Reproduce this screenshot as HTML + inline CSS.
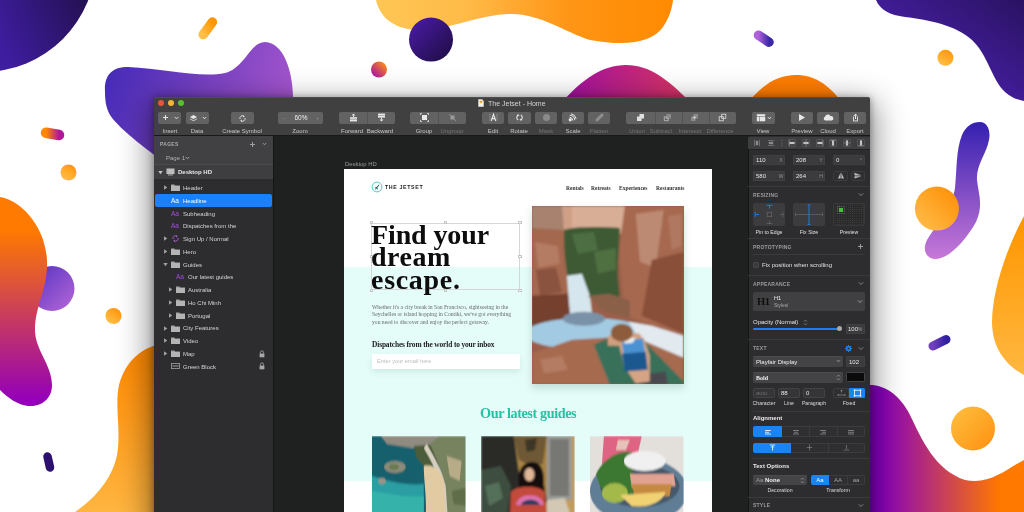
<!DOCTYPE html>
<html><head><meta charset="utf-8">
<style>
*{margin:0;padding:0;box-sizing:border-box}
html,body{width:1024px;height:512px;overflow:hidden;background:#fff;font-family:"Liberation Sans",sans-serif}
.a{position:absolute}
.t{position:absolute;white-space:nowrap;line-height:0;height:0;will-change:transform}
.t.c{transform:translateX(-50%)}
.s{font-family:"Liberation Serif",serif}
#bg{position:absolute;left:0;top:0}
</style></head><body>
<svg id="bg" width="1024" height="512" viewBox="0 0 1024 512">
<defs>
<linearGradient id="g1" gradientUnits="userSpaceOnUse" x1="0" y1="40" x2="90" y2="0"><stop offset="0" stop-color="#3e1d9e"/><stop offset="1" stop-color="#231050"/></linearGradient>
<linearGradient id="g2" x1="0" y1="0" x2="1" y2="0"><stop offset="0" stop-color="#ff8a00"/><stop offset="1" stop-color="#b0179a"/></linearGradient>
<linearGradient id="g3" x1="0" y1="0" x2="1" y2="0.3"><stop offset="0" stop-color="#3f28b5"/><stop offset="1" stop-color="#a455cc"/></linearGradient>
<linearGradient id="g4" x1="0" y1="1" x2="1" y2="0"><stop offset="0" stop-color="#ffbe48"/><stop offset="1" stop-color="#ff9500"/></linearGradient>
<linearGradient id="g5" x1="0" y1="0" x2="1" y2="1"><stop offset="0" stop-color="#4c1ca8"/><stop offset="1" stop-color="#1c0c40"/></linearGradient>
<linearGradient id="g6" x1="1" y1="0" x2="0" y2="1"><stop offset="0.1" stop-color="#ff9010"/><stop offset="0.9" stop-color="#a810a8"/></linearGradient>
<linearGradient id="g7" x1="0" y1="0" x2="1" y2="0"><stop offset="0" stop-color="#ffc654"/><stop offset="0.3" stop-color="#ffbb48"/><stop offset="0.65" stop-color="#ff9516"/><stop offset="1" stop-color="#ff8a00"/></linearGradient>
<linearGradient id="g8" x1="0" y1="0" x2="1" y2="0"><stop offset="0" stop-color="#a010a0"/><stop offset="1" stop-color="#d83560"/></linearGradient>
<linearGradient id="g9" x1="0" y1="0" x2="1" y2="0"><stop offset="0" stop-color="#b060d8"/><stop offset="1" stop-color="#3a28a8"/></linearGradient>
<linearGradient id="g10" x1="0.8" y1="0" x2="0.2" y2="1"><stop offset="0" stop-color="#ff9408"/><stop offset="1" stop-color="#ffc24a"/></linearGradient>
<linearGradient id="g11" x1="0" y1="1" x2="1" y2="0"><stop offset="0.2" stop-color="#4c22b2"/><stop offset="1" stop-color="#2a1262"/></linearGradient>
<linearGradient id="g12" x1="0" y1="0" x2="0" y2="1"><stop offset="0" stop-color="#3420b0"/><stop offset="1" stop-color="#c878d8"/></linearGradient>
<linearGradient id="g13" x1="1" y1="0" x2="0" y2="1"><stop offset="0" stop-color="#ff8c00"/><stop offset="1" stop-color="#ffc050"/></linearGradient>
<linearGradient id="g14" x1="0" y1="0" x2="0" y2="1"><stop offset="0" stop-color="#ff9500"/><stop offset="1" stop-color="#ffb840"/></linearGradient>
<linearGradient id="g15" x1="0" y1="0" x2="1" y2="0"><stop offset="0" stop-color="#7040c0"/><stop offset="1" stop-color="#3020a0"/></linearGradient>
<linearGradient id="g16" gradientUnits="userSpaceOnUse" x1="880" y1="0" x2="1000" y2="0"><stop offset="0" stop-color="#8800c0"/><stop offset="1" stop-color="#ff7800"/></linearGradient>
<linearGradient id="g17" x1="0" y1="0" x2="1" y2="1"><stop offset="0" stop-color="#ffc040"/><stop offset="1" stop-color="#ff9010"/></linearGradient>
<linearGradient id="g18" gradientUnits="userSpaceOnUse" x1="0" y1="230" x2="0" y2="400"><stop offset="0" stop-color="#ff7a00"/><stop offset="1" stop-color="#9400b8"/></linearGradient>
<linearGradient id="g19" x1="0" y1="0" x2="1" y2="1"><stop offset="0" stop-color="#5030c0"/><stop offset="1" stop-color="#b868d8"/></linearGradient>
<linearGradient id="g20" gradientUnits="userSpaceOnUse" x1="0" y1="345" x2="0" y2="512"><stop offset="0" stop-color="#ff8800"/><stop offset="1" stop-color="#ffb540"/></linearGradient>
</defs>
<circle cx="-17" cy="-41" r="113" fill="url(#g1)"/>
<line x1="46" y1="132.8" x2="59" y2="135" stroke="url(#g2)" stroke-width="10.5" stroke-linecap="round"/>
<path d="M105 92 C104 75 112 67 128 67 C165 69 200 78 225 73 C245 68 250 42 265 42 C285 43 295 75 293 110 L293 200 L175 170 C150 152 120 130 110 115 C106 108 105 100 105 92Z" fill="url(#g3)"/>
<line x1="203.2" y1="34.6" x2="212.4" y2="22" stroke="url(#g4)" stroke-width="9.5" stroke-linecap="round"/>
<path d="M376 0 C380 18 395 30 420 30 C450 30 480 14 512 14 C540 14 565 32 590 40 C628 47 652 42 663 27 C669 18 672 9 673 0Z" fill="url(#g7)"/>
<circle cx="431" cy="39.6" r="22" fill="url(#g5)"/>
<circle cx="379" cy="69.5" r="8" fill="url(#g6)"/>
<path d="M564 100 C582 80 602 65 626 65 C650 65 668 80 688 100Z" fill="url(#g8)"/>
<line x1="758.5" y1="35.2" x2="769" y2="42.2" stroke="url(#g9)" stroke-width="9.5" stroke-linecap="round"/>
<circle cx="945.4" cy="57.8" r="8" fill="url(#g10)"/>
<path d="M750 100 C763 85 777 75 796 75 C815 75 828 85 840 100Z" fill="#ff7d00"/>
<path d="M876 0 C880 10 890 15 905 17 C930 20 955 25 972 40 C988 55 992 80 1005 92 C1012 98 1018 100 1024 101 L1024 0Z" fill="url(#g11)"/>
<path d="M980 122 C987 122 991 130 989 140 C986 155 976 165 977 180 C978 192 984 205 976 222 C966 240 950 258 936 259 C926 259 922 250 927 240 C938 222 952 208 955 188 C957 168 956 150 962 135 C966 126 972 122 980 122Z" fill="url(#g12)"/>
<circle cx="936.9" cy="208.6" r="22" fill="url(#g13)"/>
<path d="M1024 216 C1008 245 992 290 992 322 C992 347 1005 365 1024 375Z" fill="url(#g14)"/>
<line x1="933" y1="346" x2="946" y2="339.5" stroke="url(#g15)" stroke-width="9" stroke-linecap="round"/>
<path d="M870 385 C885 385 900 395 910 415 C922 440 935 470 965 480 C990 485 1005 470 1024 460 L1024 512 L870 512Z" fill="url(#g16)"/>
<circle cx="973" cy="428.5" r="22" fill="url(#g17)"/>
<circle cx="52" cy="288.5" r="22.5" fill="url(#g19)"/>
<path d="M0 197 C20 200 45 225 47 260 C48 290 35 305 35 330 C35 350 52 365 52 385 C52 400 40 407 28 406 C18 405 8 398 0 390Z" fill="url(#g18)"/>
<circle cx="68.5" cy="172.5" r="8" fill="url(#g10)"/>
<circle cx="113.5" cy="316" r="8" fill="url(#g10)"/>
<line x1="47.5" y1="456.5" x2="50" y2="467.5" stroke="#2c1070" stroke-width="8.5" stroke-linecap="round"/>
<path d="M160 344 C142 348 126 360 119 385 C115 405 120 425 118 448 C116 472 100 495 75 512 L160 512Z" fill="url(#g20)"/>
</svg>
<div class="a" style="left:154px;top:97px;width:716px;height:430px;background:#1f2020;border-radius:3px 3px 0 0;box-shadow:0 1px 6px 1px rgba(0,0,0,.3),0 10px 30px 6px rgba(0,0,0,.42)"></div>
<div class="a" style="left:154px;top:97px;width:716px;height:39px;background:#404041;border-radius:3px 3px 0 0;box-shadow:inset 0 0.6px 0 #5a5a5b;border-bottom:1px solid #191919"></div>
<div class="a" style="left:157.70000000000002px;top:100.1px;width:6.4px;height:6.4px;background:#e5553d;border-radius:50%"></div>
<div class="a" style="left:167.9px;top:100.1px;width:6.4px;height:6.4px;background:#f2b632;border-radius:50%"></div>
<div class="a" style="left:178.05px;top:100.1px;width:6.4px;height:6.4px;background:#55c22b;border-radius:50%"></div>
<svg class="a" style="left:478.2px;top:99px" width="6" height="8" viewBox="0 0 6 8"><path d="M0.3 0.3 H4 L5.7 2 V7.7 H0.3Z" fill="#f2f2f2"/><path d="M1.3 2.6 L2 1.8 H4 L4.7 2.6 L3 4.6Z" fill="#f39c1f"/></svg>
<div class="t" style="left:487.5px;top:103.9px;font-size:7px;color:#d2d2d2">The Jetset - Home</div>
<div class="a" style="left:157.8px;top:112px;width:23.44999999999999px;height:11.5px;background:#626263;border-radius:2px;"></div>
<div class="a" style="left:185.5px;top:112px;width:23.5px;height:11.5px;background:#626263;border-radius:2px;"></div>
<div class="a" style="left:231px;top:112px;width:22.5px;height:11.5px;background:#626263;border-radius:2px;"></div>
<div class="a" style="left:278px;top:112px;width:44.80000000000001px;height:11.5px;background:#626263;border-radius:2px;"></div>
<div class="a" style="left:338.8px;top:112px;width:56.0px;height:11.5px;background:#626263;border-radius:2px;"></div>
<div class="a" style="left:367.3px;top:112px;width:0.6px;height:11.5px;background:#545455"></div>
<div class="a" style="left:410px;top:112px;width:56px;height:11.5px;background:#626263;border-radius:2px;"></div>
<div class="a" style="left:437.8px;top:112px;width:0.6px;height:11.5px;background:#545455"></div>
<div class="a" style="left:482px;top:112px;width:21.80000000000001px;height:11.5px;background:#626263;border-radius:2px;"></div>
<div class="a" style="left:508.2px;top:112px;width:22.500000000000057px;height:11.5px;background:#626263;border-radius:2px;"></div>
<div class="a" style="left:534.8px;top:112px;width:22.200000000000045px;height:11.5px;background:#626263;border-radius:2px;"></div>
<div class="a" style="left:561.5px;top:112px;width:22.5px;height:11.5px;background:#626263;border-radius:2px;"></div>
<div class="a" style="left:588px;top:112px;width:22.399999999999977px;height:11.5px;background:#626263;border-radius:2px;"></div>
<div class="a" style="left:626px;top:112px;width:109.89999999999998px;height:11.5px;background:#626263;border-radius:2px;"></div>
<div class="a" style="left:654.7px;top:112px;width:0.6px;height:11.5px;background:#545455"></div>
<div class="a" style="left:681.6px;top:112px;width:0.6px;height:11.5px;background:#545455"></div>
<div class="a" style="left:708.5px;top:112px;width:0.6px;height:11.5px;background:#545455"></div>
<div class="a" style="left:751.5px;top:112px;width:23.5px;height:11.5px;background:#626263;border-radius:2px;"></div>
<div class="a" style="left:790.6px;top:112px;width:22.100000000000023px;height:11.5px;background:#626263;border-radius:2px;"></div>
<div class="a" style="left:817px;top:112px;width:22.399999999999977px;height:11.5px;background:#626263;border-radius:2px;"></div>
<div class="a" style="left:844px;top:112px;width:21.799999999999955px;height:11.5px;background:#626263;border-radius:2px;"></div>
<div class="t c" style="left:169.5px;top:130.6px;font-size:6px;color:#c8c8c8">Insert</div>
<div class="t c" style="left:197.2px;top:130.6px;font-size:6px;color:#c8c8c8">Data</div>
<div class="t c" style="left:242.3px;top:130.6px;font-size:6px;color:#c8c8c8">Create Symbol</div>
<div class="t c" style="left:300.4px;top:130.6px;font-size:6px;color:#c8c8c8">Zoom</div>
<div class="t c" style="left:352px;top:130.6px;font-size:6px;color:#c8c8c8">Forward</div>
<div class="t c" style="left:380.2px;top:130.6px;font-size:6px;color:#c8c8c8">Backward</div>
<div class="t c" style="left:424px;top:130.6px;font-size:6px;color:#c8c8c8">Group</div>
<div class="t c" style="left:452px;top:130.6px;font-size:6px;color:#747474">Ungroup</div>
<div class="t c" style="left:492.9px;top:130.6px;font-size:6px;color:#c8c8c8">Edit</div>
<div class="t c" style="left:519.4px;top:130.6px;font-size:6px;color:#c8c8c8">Rotate</div>
<div class="t c" style="left:545.9px;top:130.6px;font-size:6px;color:#747474">Mask</div>
<div class="t c" style="left:572.7px;top:130.6px;font-size:6px;color:#c8c8c8">Scale</div>
<div class="t c" style="left:599.2px;top:130.6px;font-size:6px;color:#747474">Flatten</div>
<div class="t c" style="left:636.5px;top:130.6px;font-size:6px;color:#747474">Union</div>
<div class="t c" style="left:661px;top:130.6px;font-size:6px;color:#747474">Subtract</div>
<div class="t c" style="left:689.5px;top:130.6px;font-size:6px;color:#747474">Intersect</div>
<div class="t c" style="left:719.5px;top:130.6px;font-size:6px;color:#747474">Difference</div>
<div class="t c" style="left:763.2px;top:130.6px;font-size:6px;color:#c8c8c8">View</div>
<div class="t c" style="left:801.6px;top:130.6px;font-size:6px;color:#c8c8c8">Preview</div>
<div class="t c" style="left:828.2px;top:130.6px;font-size:6px;color:#c8c8c8">Cloud</div>
<div class="t c" style="left:854.9px;top:130.6px;font-size:6px;color:#c8c8c8">Export</div>
<div class="a" style="left:163.2px;top:117.2px;width:5px;height:1px;background:#e8e8e8"></div>
<div class="a" style="left:165.2px;top:115.2px;width:1px;height:5px;background:#e8e8e8"></div>
<svg class="a" style="left:174px;top:116.2px" width="5" height="4" viewBox="0 0 5 4"><path d="M0.8 1 L2.5 2.8 L4.2 1" stroke="#e8e8e8" stroke-width="0.9" fill="none"/></svg>
<svg class="a" style="left:201.5px;top:116.2px" width="5" height="4" viewBox="0 0 5 4"><path d="M0.8 1 L2.5 2.8 L4.2 1" stroke="#e8e8e8" stroke-width="0.9" fill="none"/></svg>
<svg class="a" style="left:767px;top:116.2px" width="5" height="4" viewBox="0 0 5 4"><path d="M0.8 1 L2.5 2.8 L4.2 1" stroke="#e8e8e8" stroke-width="0.9" fill="none"/></svg>
<svg class="a" style="left:188.5px;top:114px" width="9" height="9" viewBox="0 0 9 9"><path d="M4.5 1 L8 3 L4.5 5 L1 3Z" fill="#e8e8e8"/><path d="M1 4.3 L4.5 6.3 L8 4.3 L8 5.3 L4.5 7.3 L1 5.3Z" fill="#c8c8c8"/></svg>
<svg class="a" style="left:238px;top:113.5px" width="9" height="9" viewBox="0 0 9 9"><path d="M2 5 A2.6 2.6 0 0 1 6 2.2 M7 4 A2.6 2.6 0 0 1 3 6.8" stroke="#e8e8e8" stroke-width="0.9" fill="none"/><path d="M5.2 1.2 L6.8 2.4 L5.2 3.4Z M3.8 5.6 L2.2 6.8 L3.8 7.8Z" fill="#e8e8e8"/></svg>
<div class="t" style="left:281.5px;top:117.7px;font-size:6px;color:#8a8a8a">−</div>
<div class="t" style="left:316px;top:117.7px;font-size:6px;color:#8a8a8a">+</div>
<div class="t c" style="left:300.6px;top:117.7px;font-size:6.5px;color:#f0f0f0">60%</div>
<svg class="a" style="left:348.5px;top:113px" width="9" height="9" viewBox="0 0 9 9"><path d="M4.5 0.5 L6.5 2.5 L2.5 2.5Z" fill="#e8e8e8"/><rect x="4" y="2.4" width="1" height="1.6" fill="#e8e8e8"/><rect x="1" y="4.2" width="7" height="1.6" fill="#e8e8e8"/><rect x="1" y="6.4" width="7" height="2" fill="#e8e8e8"/></svg>
<svg class="a" style="left:376.5px;top:113px" width="9" height="9" viewBox="0 0 9 9"><rect x="1" y="0.6" width="7" height="2" fill="#e8e8e8"/><rect x="1" y="3" width="7" height="1.6" fill="#e8e8e8"/><rect x="4" y="4.6" width="1" height="2" fill="#e8e8e8"/><path d="M4.5 8.5 L6.5 6.5 L2.5 6.5Z" fill="#e8e8e8"/></svg>
<svg class="a" style="left:419.5px;top:113px" width="9" height="9" viewBox="0 0 9 9"><rect x="2" y="2" width="5" height="5" fill="#e8e8e8"/><path d="M0.5 2 V0.5 H2 M7 0.5 H8.5 V2 M8.5 7 V8.5 H7 M2 8.5 H0.5 V7" stroke="#e8e8e8" stroke-width="0.8" fill="none"/></svg>
<svg class="a" style="left:447.5px;top:113px" width="9" height="9" viewBox="0 0 9 9"><rect x="2.5" y="2.5" width="4" height="4" fill="#9a9a9a"/><path d="M1 1 L8 8" stroke="#9a9a9a" stroke-width="0.8"/></svg>
<svg class="a" style="left:488.5px;top:113px" width="9" height="9" viewBox="0 0 9 9"><path d="M1 1 V8 M8 1 V8" stroke="#e8e8e8" stroke-width="0.5" stroke-dasharray="1 0.8"/><path d="M2.2 8 L4.5 1.2 L6.8 8 M3.1 5.6 H5.9" stroke="#e8e8e8" stroke-width="1.1" fill="none"/></svg>
<svg class="a" style="left:515px;top:113.2px" width="9" height="9" viewBox="0 0 9 9"><path d="M3.2 2.2 A2.7 2.7 0 0 0 3.2 7" stroke="#e8e8e8" stroke-width="1.1" fill="none"/><path d="M5.8 6.8 A2.7 2.7 0 0 0 5.8 2" stroke="#e8e8e8" stroke-width="1.1" fill="none"/><path d="M2.4 1 L4.6 2.2 L2.6 3.4Z M6.6 8 L4.4 6.8 L6.4 5.6Z" fill="#e8e8e8"/></svg>
<div class="a" style="left:542.5px;top:114.3px;width:7px;height:7px;background:#8a8a8a;border-radius:50%"></div>
<svg class="a" style="left:568px;top:113px" width="9" height="9" viewBox="0 0 9 9"><path d="M1.5 4.3 A3.2 3.2 0 0 1 4.7 7.5" stroke="#e8e8e8" stroke-width="1" fill="none"/><path d="M1.8 2.3 A5.2 5.2 0 0 1 6.7 7.2" stroke="#e8e8e8" stroke-width="1" fill="none"/><path d="M3 0.8 A6.5 6.5 0 0 1 8.2 6" stroke="#e8e8e8" stroke-width="1" fill="none"/><circle cx="2.2" cy="6.8" r="1.6" fill="#e8e8e8"/></svg>
<svg class="a" style="left:595px;top:113px" width="9" height="9" viewBox="0 0 9 9"><path d="M2 7 L7 2" stroke="#8e8e8e" stroke-width="3" stroke-linecap="round"/></svg>
<svg class="a" style="left:635.5px;top:113px" width="9" height="9" viewBox="0 0 9 9"><rect x="3.5" y="1" width="4.5" height="4.5" fill="#e0e0e0"/><rect x="1" y="3.5" width="4.5" height="4.5" fill="#e0e0e0"/></svg>
<svg class="a" style="left:662.9px;top:113px" width="9" height="9" viewBox="0 0 9 9"><rect x="3.5" y="1" width="4.5" height="4.5" fill="#8a8a8a"/><path d="M1.3 3.8 H3.5 V5.5 H5.3 V7.7 H1.3Z" fill="none" stroke="#d0d0d0" stroke-width="0.7"/></svg>
<svg class="a" style="left:690.2px;top:113px" width="9" height="9" viewBox="0 0 9 9"><rect x="3.5" y="1" width="4.5" height="4.5" fill="#8a8a8a"/><rect x="1" y="3.5" width="4.5" height="4.5" fill="#8a8a8a"/><rect x="3.5" y="3.5" width="2" height="2" fill="#e0e0e0"/></svg>
<svg class="a" style="left:717.5px;top:113px" width="9" height="9" viewBox="0 0 9 9"><rect x="3.7" y="1.2" width="4.1" height="4.1" fill="none" stroke="#e0e0e0" stroke-width="0.8"/><rect x="1.2" y="3.7" width="4.1" height="4.1" fill="none" stroke="#e0e0e0" stroke-width="0.8"/></svg>
<svg class="a" style="left:755.5px;top:113px" width="10" height="9" viewBox="0 0 10 9"><rect x="0.8" y="1.2" width="8.4" height="2" fill="#e8e8e8"/><rect x="0.8" y="3.7" width="2.6" height="4.6" fill="#e8e8e8"/><rect x="3.9" y="3.7" width="5.3" height="4.6" fill="#e8e8e8"/></svg>
<svg class="a" style="left:797px;top:113px" width="9" height="9" viewBox="0 0 9 9"><path d="M2 1 L8 4.5 L2 8Z" fill="#e8e8e8"/></svg>
<svg class="a" style="left:822.7px;top:112.8px" width="11" height="9" viewBox="0 0 11 9"><path d="M2.2 7.6 A2 2 0 0 1 2 3.8 A3 3 0 0 1 7.6 3.2 A2.2 2.2 0 0 1 8.6 7.6Z" fill="#e8e8e8"/></svg>
<svg class="a" style="left:850.5px;top:113px" width="9" height="9" viewBox="0 0 9 9"><path d="M2.5 3.5 V8 H6.5 V3.5" stroke="#e8e8e8" stroke-width="0.9" fill="none"/><path d="M4.5 0.8 L6.5 2.8 H2.5Z" fill="#e8e8e8"/><rect x="4" y="2.5" width="1" height="3.5" fill="#e8e8e8"/></svg>
<div class="a" style="left:154px;top:136px;width:119.5px;height:380px;background:#2d2d2f"></div>
<div class="a" style="left:154px;top:136px;width:119.5px;height:28px;background:#414143"></div>
<div class="a" style="left:154px;top:164.2px;width:119.5px;height:0.7px;background:#4b4b4d"></div>
<div class="a" style="left:154px;top:164.9px;width:119.5px;height:14.6px;background:#3e3e40"></div>
<div class="a" style="left:154px;top:179.5px;width:119.5px;height:0.7px;background:#2a2a2c"></div>
<div class="a" style="left:273.3px;top:136px;width:0.7px;height:380px;background:#151515"></div>
<div class="t" style="left:159.7px;top:144px;font-size:5px;font-weight:bold;color:#a8a8a8;letter-spacing:0.3px">PAGES</div>
<div class="a" style="left:250px;top:143.6px;width:5px;height:0.8px;background:#a0a0a0"></div>
<div class="a" style="left:252.1px;top:141.5px;width:0.8px;height:5px;background:#a0a0a0"></div>
<svg class="a" style="left:261.5px;top:142px" width="5" height="4" viewBox="0 0 5 4"><path d="M0.8 1 L2.5 2.8 L4.2 1" stroke="#a0a0a0" stroke-width="0.9" fill="none"/></svg>
<div class="t" style="left:165.6px;top:158px;font-size:6px;color:#b0b0b0">Page 1</div>
<svg class="a" style="left:185.3px;top:156.3px" width="5" height="4" viewBox="0 0 5 4"><path d="M0.8 1 L2.5 2.8 L4.2 1" stroke="#b0b0b0" stroke-width="0.9" fill="none"/></svg>
<svg class="a" style="left:157.5px;top:169.5px" width="5" height="5" viewBox="0 0 5 5"><path d="M0.3 1 L4.7 1 L2.5 4.3Z" fill="#c8c8c8"/></svg>
<svg class="a" style="left:165.5px;top:168px" width="9" height="8" viewBox="0 0 9 8"><rect x="0.5" y="0.5" width="8" height="5.5" fill="#bdbdbd"/><rect x="2" y="6.3" width="5" height="1.2" fill="#9a9a9a"/></svg>
<div class="t" style="left:177.8px;top:172.3px;font-size:6px;font-weight:bold;color:#e6e6e6">Desktop HD</div>
<div class="a" style="left:155.2px;top:194px;width:116.4px;height:13.2px;background:#1a80fb;border-radius:2px"></div>
<svg class="a" style="left:163.3px;top:185.3px" width="5" height="5" viewBox="0 0 5 5"><path d="M1 0.3 L4.3 2.5 L1 4.7Z" fill="#a0a0a0"/></svg>
<svg class="a" style="left:170.8px;top:184.3px" width="9" height="7" viewBox="0 0 9 7"><path d="M0 0.5 H3.3 L4.2 1.4 H9 V7 H0Z" fill="#a4a4a4"/><rect x="0" y="2" width="9" height="5" fill="#b4b4b4"/></svg>
<div class="t" style="left:182.8px;top:188.10000000000002px;font-size:6px;color:#d4d4d4">Header</div>
<div class="t" style="left:170.7px;top:200.75px;font-size:6.5px;color:#ffffff">Aa</div>
<div class="t" style="left:182.8px;top:200.85000000000002px;font-size:6px;color:#ffffff">Headline</div>
<div class="t" style="left:170.7px;top:213.5px;font-size:6.5px;color:#a64ee0">Aa</div>
<div class="t" style="left:182.8px;top:213.60000000000002px;font-size:6px;color:#d4d4d4">Subheading</div>
<div class="t" style="left:170.7px;top:226.25px;font-size:6.5px;color:#a64ee0">Aa</div>
<div class="t" style="left:182.8px;top:226.35000000000002px;font-size:6px;color:#d4d4d4">Dispatches from the</div>
<svg class="a" style="left:163.3px;top:236.3px" width="5" height="5" viewBox="0 0 5 5"><path d="M1 0.3 L4.3 2.5 L1 4.7Z" fill="#a0a0a0"/></svg>
<svg class="a" style="left:170.5px;top:234.3px" width="9" height="9" viewBox="0 0 9 9"><path d="M2 5 A2.6 2.6 0 0 1 6 2.2 M7 4 A2.6 2.6 0 0 1 3 6.8" stroke="#b35fd9" stroke-width="0.9" fill="none"/><path d="M5.2 1.2 L6.8 2.4 L5.2 3.4Z M3.8 5.6 L2.2 6.8 L3.8 7.8Z" fill="#b35fd9"/></svg>
<div class="t" style="left:182.8px;top:239.10000000000002px;font-size:6px;color:#d4d4d4">Sign Up / Normal</div>
<svg class="a" style="left:163.3px;top:249.05px" width="5" height="5" viewBox="0 0 5 5"><path d="M1 0.3 L4.3 2.5 L1 4.7Z" fill="#a0a0a0"/></svg>
<svg class="a" style="left:170.8px;top:248.05px" width="9" height="7" viewBox="0 0 9 7"><path d="M0 0.5 H3.3 L4.2 1.4 H9 V7 H0Z" fill="#a4a4a4"/><rect x="0" y="2" width="9" height="5" fill="#b4b4b4"/></svg>
<div class="t" style="left:182.8px;top:251.85000000000002px;font-size:6px;color:#d4d4d4">Hero</div>
<svg class="a" style="left:163.3px;top:261.8px" width="5" height="5" viewBox="0 0 5 5"><path d="M0.3 1 L4.7 1 L2.5 4.3Z" fill="#a0a0a0"/></svg>
<svg class="a" style="left:170.8px;top:260.8px" width="9" height="7" viewBox="0 0 9 7"><path d="M0 0.5 H3.3 L4.2 1.4 H9 V7 H0Z" fill="#a4a4a4"/><rect x="0" y="2" width="9" height="5" fill="#b4b4b4"/></svg>
<div class="t" style="left:182.8px;top:264.6px;font-size:6px;color:#d4d4d4">Guides</div>
<div class="t" style="left:175.7px;top:277.25px;font-size:6.5px;color:#a64ee0">Aa</div>
<div class="t" style="left:187.8px;top:277.35px;font-size:6px;color:#d4d4d4">Our latest guides</div>
<svg class="a" style="left:168.3px;top:287.3px" width="5" height="5" viewBox="0 0 5 5"><path d="M1 0.3 L4.3 2.5 L1 4.7Z" fill="#a0a0a0"/></svg>
<svg class="a" style="left:175.8px;top:286.3px" width="9" height="7" viewBox="0 0 9 7"><path d="M0 0.5 H3.3 L4.2 1.4 H9 V7 H0Z" fill="#a4a4a4"/><rect x="0" y="2" width="9" height="5" fill="#b4b4b4"/></svg>
<div class="t" style="left:187.8px;top:290.1px;font-size:6px;color:#d4d4d4">Australia</div>
<svg class="a" style="left:168.3px;top:300.05px" width="5" height="5" viewBox="0 0 5 5"><path d="M1 0.3 L4.3 2.5 L1 4.7Z" fill="#a0a0a0"/></svg>
<svg class="a" style="left:175.8px;top:299.05px" width="9" height="7" viewBox="0 0 9 7"><path d="M0 0.5 H3.3 L4.2 1.4 H9 V7 H0Z" fill="#a4a4a4"/><rect x="0" y="2" width="9" height="5" fill="#b4b4b4"/></svg>
<div class="t" style="left:187.8px;top:302.85px;font-size:6px;color:#d4d4d4">Ho Chi Minh</div>
<svg class="a" style="left:168.3px;top:312.8px" width="5" height="5" viewBox="0 0 5 5"><path d="M1 0.3 L4.3 2.5 L1 4.7Z" fill="#a0a0a0"/></svg>
<svg class="a" style="left:175.8px;top:311.8px" width="9" height="7" viewBox="0 0 9 7"><path d="M0 0.5 H3.3 L4.2 1.4 H9 V7 H0Z" fill="#a4a4a4"/><rect x="0" y="2" width="9" height="5" fill="#b4b4b4"/></svg>
<div class="t" style="left:187.8px;top:315.6px;font-size:6px;color:#d4d4d4">Portugal</div>
<svg class="a" style="left:163.3px;top:325.55px" width="5" height="5" viewBox="0 0 5 5"><path d="M1 0.3 L4.3 2.5 L1 4.7Z" fill="#a0a0a0"/></svg>
<svg class="a" style="left:170.8px;top:324.55px" width="9" height="7" viewBox="0 0 9 7"><path d="M0 0.5 H3.3 L4.2 1.4 H9 V7 H0Z" fill="#a4a4a4"/><rect x="0" y="2" width="9" height="5" fill="#b4b4b4"/></svg>
<div class="t" style="left:182.8px;top:328.35px;font-size:6px;color:#d4d4d4">City Features</div>
<svg class="a" style="left:163.3px;top:338.3px" width="5" height="5" viewBox="0 0 5 5"><path d="M1 0.3 L4.3 2.5 L1 4.7Z" fill="#a0a0a0"/></svg>
<svg class="a" style="left:170.8px;top:337.3px" width="9" height="7" viewBox="0 0 9 7"><path d="M0 0.5 H3.3 L4.2 1.4 H9 V7 H0Z" fill="#a4a4a4"/><rect x="0" y="2" width="9" height="5" fill="#b4b4b4"/></svg>
<div class="t" style="left:182.8px;top:341.1px;font-size:6px;color:#d4d4d4">Video</div>
<svg class="a" style="left:163.3px;top:351.05px" width="5" height="5" viewBox="0 0 5 5"><path d="M1 0.3 L4.3 2.5 L1 4.7Z" fill="#a0a0a0"/></svg>
<svg class="a" style="left:170.8px;top:350.05px" width="9" height="7" viewBox="0 0 9 7"><path d="M0 0.5 H3.3 L4.2 1.4 H9 V7 H0Z" fill="#a4a4a4"/><rect x="0" y="2" width="9" height="5" fill="#b4b4b4"/></svg>
<div class="t" style="left:182.8px;top:353.85px;font-size:6px;color:#d4d4d4">Map</div>
<svg class="a" style="left:258.5px;top:349.55px" width="6" height="8" viewBox="0 0 6 8"><path d="M1.5 3.5 V2.3 A1.5 1.5 0 0 1 4.5 2.3 V3.5" stroke="#a8a8a8" stroke-width="0.8" fill="none"/><rect x="0.6" y="3.5" width="4.8" height="3.8" fill="#a8a8a8"/></svg>
<svg class="a" style="left:170.8px;top:363.3px" width="9" height="6" viewBox="0 0 9 6"><rect x="0.4" y="0.4" width="8.2" height="5.2" stroke="#a0a0a0" stroke-width="0.8" fill="none"/><rect x="1.5" y="2.5" width="6" height="1" fill="#a0a0a0"/></svg>
<div class="t" style="left:182.8px;top:366.6px;font-size:6px;color:#d4d4d4">Green Block</div>
<svg class="a" style="left:258.5px;top:362.3px" width="6" height="8" viewBox="0 0 6 8"><path d="M1.5 3.5 V2.3 A1.5 1.5 0 0 1 4.5 2.3 V3.5" stroke="#a8a8a8" stroke-width="0.8" fill="none"/><rect x="0.6" y="3.5" width="4.8" height="3.8" fill="#a8a8a8"/></svg>
<div class="t" style="left:345px;top:163.9px;font-size:5.9px;color:#9a9a9a">Desktop HD</div>
<div class="a" style="left:344px;top:169px;width:368px;height:350px;background:#ffffff"></div>
<div class="a" style="left:344px;top:267px;width:368px;height:214px;background:#e4fdf9"></div>
<svg class="a" style="left:370.6px;top:181.2px" width="12" height="12" viewBox="0 0 12 12"><circle cx="6" cy="6" r="4.9" stroke="#52cfc0" stroke-width="1" fill="none"/><path d="M4 8.6 L5 6.8 L3.6 6.2 L4.2 5.8 L5.6 6 L7.8 3.6 L8.4 4.2 L6.4 6.6 L7 8.2 L6.5 8.6 L5.6 7.4 L4.6 8.8Z" fill="#1f6e66"/></svg>
<div class="t" style="left:385px;top:187.26px;font-size:5.3px;font-weight:bold;color:#1e1e1e;letter-spacing:0.62px">THE JETSET</div>
<div class="t" style="left:565.5px;top:187.94px;font-size:5.5px;font-family:'Liberation Serif',serif;font-weight:bold;color:#333333">Rentals</div>
<div class="t" style="left:590.5px;top:187.94px;font-size:5.5px;font-family:'Liberation Serif',serif;font-weight:bold;color:#333333">Retreats</div>
<div class="t" style="left:619.3px;top:187.94px;font-size:5.5px;font-family:'Liberation Serif',serif;font-weight:bold;color:#333333">Experiences</div>
<div class="t" style="left:655.5px;top:187.94px;font-size:5.5px;font-family:'Liberation Serif',serif;font-weight:bold;color:#333333">Restaurants</div>
<div class="a" style="left:371.25px;top:222.7px;width:148.75px;height:67.7px;border:0.6px solid #d6d6d6"></div>
<div class="a" style="left:369.65px;top:221.1px;width:3.2px;height:3.2px;background:#fff;border:0.6px solid #c4c4c4;border-radius:0.5px"></div>
<div class="a" style="left:369.65px;top:254.9px;width:3.2px;height:3.2px;background:#fff;border:0.6px solid #c4c4c4;border-radius:0.5px"></div>
<div class="a" style="left:369.65px;top:288.79999999999995px;width:3.2px;height:3.2px;background:#fff;border:0.6px solid #c4c4c4;border-radius:0.5px"></div>
<div class="a" style="left:444.0px;top:221.1px;width:3.2px;height:3.2px;background:#fff;border:0.6px solid #c4c4c4;border-radius:0.5px"></div>
<div class="a" style="left:444.0px;top:288.79999999999995px;width:3.2px;height:3.2px;background:#fff;border:0.6px solid #c4c4c4;border-radius:0.5px"></div>
<div class="a" style="left:518.4px;top:221.1px;width:3.2px;height:3.2px;background:#fff;border:0.6px solid #c4c4c4;border-radius:0.5px"></div>
<div class="a" style="left:518.4px;top:254.9px;width:3.2px;height:3.2px;background:#fff;border:0.6px solid #c4c4c4;border-radius:0.5px"></div>
<div class="a" style="left:518.4px;top:288.79999999999995px;width:3.2px;height:3.2px;background:#fff;border:0.6px solid #c4c4c4;border-radius:0.5px"></div>
<div class="t" style="left:371px;top:235.35px;font-size:28px;font-family:'Liberation Serif',serif;font-weight:bold;color:#0d0d0d;letter-spacing:-0.12px">Find your</div>
<div class="t" style="left:371px;top:257.25px;font-size:28px;font-family:'Liberation Serif',serif;font-weight:bold;color:#0d0d0d;letter-spacing:0.55px">dream</div>
<div class="t" style="left:371px;top:279.55px;font-size:28px;font-family:'Liberation Serif',serif;font-weight:bold;color:#0d0d0d;letter-spacing:0.7px">escape.</div>
<div class="t" style="left:371.6px;top:306.69px;font-size:5.65px;font-family:'Liberation Serif',serif;color:#6a6a6a">Whether it&#39;s a city break in San Francisco, sightseeing in the</div>
<div class="t" style="left:371.6px;top:314.39px;font-size:5.65px;font-family:'Liberation Serif',serif;color:#6a6a6a">Seychelles or island hopping in Contiki, we&#39;ve got everything</div>
<div class="t" style="left:371.6px;top:322.09px;font-size:5.65px;font-family:'Liberation Serif',serif;color:#6a6a6a">you need to discover and enjoy the perfect getaway.</div>
<div class="t" style="left:371.6px;top:344.50px;font-size:7.4px;font-family:'Liberation Serif',serif;font-weight:bold;color:#1c1c1c;letter-spacing:-0.13px">Dispatches from the world to your inbox</div>
<div class="a" style="left:371.9px;top:353.7px;width:148.1px;height:15.2px;background:#fff;box-shadow:0 3px 6px rgba(0,60,50,.10)"></div>
<div class="t" style="left:376.7px;top:361.32px;font-size:5.7px;color:#bcbcbc">Enter your email here</div>
<div class="t" style="left:480.2px;top:413.41px;font-size:14.2px;font-family:'Liberation Serif',serif;font-weight:bold;color:#27c2a4;letter-spacing:-0.4px">Our latest guides</div>
<div class="a" style="left:532.3px;top:205.5px;width:151.7px;height:178.6px;background:#9a5a45;box-shadow:0 4px 8px rgba(0,40,30,.16)"></div>
<svg class="a" style="left:532.3px;top:205.5px" width="151.7" height="178.6" viewBox="0 0 152 179" preserveAspectRatio="none"><defs><filter id="bl1" x="-5%" y="-5%" width="110%" height="110%"><feGaussianBlur stdDeviation="1.3"/></filter><clipPath id="cp1"><rect width="152" height="179"/></clipPath></defs><g clip-path="url(#cp1)"><g filter="url(#bl1)">
<rect width="152" height="179" fill="#9a5e48"/>
<rect x="0" y="0" width="152" height="28" fill="#cf9f86"/>
<rect x="40" y="0" width="55" height="24" fill="#d8ae96"/>
<path d="M0 0 H30 L32 26 L0 30Z" fill="#a8826e"/>
<path d="M0 22 L33 24 L36 50 L36 90 L0 94Z" fill="#a46850"/>
<path d="M3 36 L26 40 L28 58 L6 62Z" fill="#b47c62"/>
<path d="M4 64 L24 62 L30 86 L8 90Z" fill="#8a5240"/>
<path d="M32 24 C45 20 75 21 88 22 L87 45 C85 60 86 75 88 90 C80 94 70 95 62 93 C54 90 48 88 44 84 L36 72 C34 60 32 50 32 24Z" fill="#3c5a34"/>
<path d="M40 28 L62 26 L66 44 L46 48Z" fill="#4e6e42"/>
<path d="M62 46 L84 42 L84 64 L66 68Z" fill="#50703f"/>
<path d="M93 0 H152 V130 L98 112 L91 90 L87 45Z" fill="#a66850"/>
<path d="M104 8 L132 4 L124 62 L108 56Z" fill="#bc8a72"/>
<path d="M136 10 L150 8 L150 40 L140 44Z" fill="#b07860"/>
<path d="M120 54 L152 46 V128 L110 110Z" fill="#8a5038"/>
<path d="M35 70 L50 68 L58 90 L60 107 L38 108Z" fill="#d6e6ee"/>
<path d="M0 90 L36 88 L38 110 L20 122 L0 128Z" fill="#74402e"/>
<path d="M56 90 L78 88 L98 95 L98 112 L72 105Z" fill="#8a6048"/>
<ellipse cx="55" cy="128" rx="62" ry="16" fill="#a2cae2"/>
<ellipse cx="52" cy="113" rx="21" ry="7" fill="#7a92a8"/>
<path d="M97 116 L120 120 L152 130 V152 L130 146 L107 132Z" fill="#e2eaf0"/>
<path d="M0 147 L20 141 L40 134 L74 132 L100 130 L152 152 V179 H0Z" fill="#a66a50"/>
<path d="M8 154 L30 150 L36 164 L12 168Z" fill="#b47c62"/>
<path d="M62 139 L80 131 L107 130 L152 176 V179 H78Z" fill="#37705a"/>
<path d="M102 170 L134 166 L136 179 H104Z" fill="#4a4a50"/>
<path d="M86 134 L112 132 L118 150 L118 176 L104 178 L92 160Z" fill="#d6a484"/>
<path d="M76 130 L96 127 L108 128 L114 138 L90 140 L76 140Z" fill="#d0a080"/>
<path d="M90 134 L111 133 L114 150 L92 152Z" fill="#4c92d2"/>
<path d="M91 133 L104 132 L101 137 L93 138Z" fill="#eeeeee"/>
<path d="M90 148 L114 146 L116 164 L93 166Z" fill="#1a5890"/>
<ellipse cx="90" cy="127" rx="11" ry="9" fill="#8c5c3a"/>
</g></g></svg>
<svg class="a" style="left:372px;top:436.1px" width="93.6" height="80" viewBox="0 0 94 80" preserveAspectRatio="none"><defs><filter id="f2" x="-5%" y="-5%" width="110%" height="110%"><feGaussianBlur stdDeviation="0.8"/></filter><clipPath id="cf2"><rect width="94" height="80"/></clipPath></defs><g clip-path="url(#cf2)"><g filter="url(#f2)">
<rect width="94" height="80" fill="#1d7480"/>
<path d="M0 0 H55 V80 H0Z" fill="#16606e"/>
<path d="M0 40 C15 45 35 50 52 48 V80 H0Z" fill="#2a9ea2"/>
<path d="M0 55 C20 58 35 62 52 60 V80 H0Z" fill="#35b3aa"/>
<path d="M9 0 H70 L62 10 L40 12 L15 8Z" fill="#8f8b80"/>
<ellipse cx="23" cy="31" rx="11" ry="6" fill="#8c8a7a"/>
<ellipse cx="22" cy="31" rx="5" ry="3" fill="#6a7a50"/>
<ellipse cx="10" cy="45" rx="4" ry="3" fill="#9a9488"/>
<path d="M42 10 L68 8 L70 30 L52 30 L45 22Z" fill="#4c5c3a"/>
<path d="M55 8 C62 20 70 35 76 50 L80 80 H72 L70 50 C65 35 58 22 52 12Z" fill="#d6cfbf"/>
<path d="M52 30 C60 28 68 32 72 45 L74 80 H54 C55 60 52 45 52 30Z" fill="#e2cba2"/>
<path d="M68 0 H94 V80 H76 L74 50 C70 35 64 20 58 8Z" fill="#77825e"/>
<path d="M75 20 L90 25 L88 45 L78 40Z" fill="#b8ab88"/>
<path d="M80 55 L94 52 V70 L82 68Z" fill="#5e6e48"/>
</g></g></svg>
<svg class="a" style="left:481px;top:436.1px" width="93.8" height="80" viewBox="0 0 94 80" preserveAspectRatio="none"><defs><filter id="f3" x="-5%" y="-5%" width="110%" height="110%"><feGaussianBlur stdDeviation="0.8"/></filter><clipPath id="cf3"><rect width="94" height="80"/></clipPath></defs><g clip-path="url(#cf3)"><g filter="url(#f3)">
<rect width="94" height="80" fill="#2a2c26"/>
<path d="M33 0 H68 V80 H44Z" fill="#a88444"/>
<path d="M33 0 H66 L62 28 L50 30 L38 24Z" fill="#6e5834"/>
<path d="M44 4 L56 2 L54 14 L46 16Z" fill="#3c3426"/>
<path d="M66 0 H94 V80 H66Z" fill="#c29c5c"/>
<path d="M66 0 H91 V64 H66Z" fill="#9a9a96"/>
<path d="M69 3 H88 V60 H69Z" fill="#777773"/>
<path d="M0 34 L20 30 L30 50 L26 80 H0Z" fill="#3e4e40"/>
<path d="M4 50 L18 46 L22 62 L8 70Z" fill="#55705a"/>
<path d="M66 64 L84 62 L90 80 H66Z" fill="#d2c8b4"/>
<path d="M38 48 C36 32 44 26 51 26 C60 26 64 34 63 48 L66 66 L58 70 L40 62Z" fill="#141110"/>
<ellipse cx="48.5" cy="38.5" rx="5" ry="6.8" fill="#e0b696"/>
<path d="M30 56 C36 49 58 49 64 56 L66 80 H29Z" fill="#c24c3a"/>
<path d="M35 69 C37 56 61 56 63 69Z" fill="#de72ae"/>
<path d="M40 69 C42 62 57 62 59 69Z" fill="#2c3a60"/>
</g></g></svg>
<svg class="a" style="left:590.4px;top:436.1px" width="93.6" height="80" viewBox="0 0 94 80" preserveAspectRatio="none"><defs><filter id="f4" x="-5%" y="-5%" width="110%" height="110%"><feGaussianBlur stdDeviation="0.8"/></filter><clipPath id="cf4"><rect width="94" height="80"/></clipPath></defs><g clip-path="url(#cf4)"><g filter="url(#f4)">
<rect width="94" height="80" fill="#e3dfdb"/>
<path d="M14 0 H52 L48 18 L12 28Z" fill="#df6482"/>
<path d="M28 4 L40 4 L36 14 L26 14Z" fill="#e6c2b8"/>
<ellipse cx="49" cy="55" rx="49" ry="33" fill="#5f7d95"/>
<ellipse cx="50" cy="50" rx="40" ry="21" fill="#46596a"/>
<path d="M6 38 C12 25 26 14 42 16 L44 58 L20 60 L10 50Z" fill="#3d7832"/>
<ellipse cx="25" cy="57" rx="13" ry="10" fill="#a3b948"/>
<path d="M40 38 H84 L86 50 L42 52Z" fill="#e2a292"/>
<path d="M42 48 H82 L80 60 L45 62Z" fill="#c48a42"/>
<ellipse cx="55" cy="25" rx="21" ry="10" fill="#f0f0f0"/>
<path d="M30 59 L76 56 C72 68 55 72 42 70Z" fill="#f0d272"/>
</g></g></svg>
<div class="a" style="left:748px;top:136px;width:122px;height:380px;background:#2d2d2f"></div>
<div class="a" style="left:747.6px;top:136px;width:0.8px;height:380px;background:#161616"></div>
<div class="a" style="left:748.4px;top:136.5px;width:121.6px;height:12.8px;background:#3e3e40"></div>
<div class="a" style="left:748.4px;top:149.3px;width:121.6px;height:0.6px;background:#222224"></div>
<svg class="a" style="left:753.3px;top:138.9px" width="8" height="8" viewBox="0 0 8 8"><rect x="1" y="0.8" width="0.6" height="6.4" fill="#8a8a8a"/><rect x="6.4" y="0.8" width="0.6" height="6.4" fill="#8a8a8a"/><rect x="2.8" y="1.8" width="2.4" height="4.4" fill="#8a8a8a"/></svg>
<svg class="a" style="left:767.2px;top:138.9px" width="8" height="8" viewBox="0 0 8 8"><rect x="0.8" y="1" width="6.4" height="0.6" fill="#8a8a8a"/><rect x="0.8" y="6.4" width="6.4" height="0.6" fill="#8a8a8a"/><rect x="1.8" y="2.8" width="4.4" height="2.4" fill="#8a8a8a"/></svg>
<svg class="a" style="left:777.7px;top:138.9px" width="8" height="8" viewBox="0 0 8 8"><rect x="3.6" y="1" width="0.7" height="0.9" fill="#8a8a8a"/><rect x="3.6" y="3.6" width="0.7" height="0.9" fill="#8a8a8a"/><rect x="3.6" y="6.1" width="0.7" height="0.9" fill="#8a8a8a"/></svg>
<svg class="a" style="left:787.8px;top:138.9px" width="8" height="8" viewBox="0 0 8 8"><rect x="0.4" y="0.4" width="7.2" height="7.2" rx="1" stroke="#666668" stroke-width="0.6" fill="none"/><rect x="1.4" y="2.9" width="5.2" height="2.2" fill="#c4c4c4"/><rect x="0.8999999999999999" y="0.8" width="0.6" height="6.4" fill="#9a9a9a"/></svg>
<svg class="a" style="left:801.6px;top:138.9px" width="8" height="8" viewBox="0 0 8 8"><rect x="0.4" y="0.4" width="7.2" height="7.2" rx="1" stroke="#666668" stroke-width="0.6" fill="none"/><rect x="1.4" y="2.9" width="5.2" height="2.2" fill="#c4c4c4"/><rect x="3.7" y="0.8" width="0.6" height="6.4" fill="#9a9a9a"/></svg>
<svg class="a" style="left:815.5px;top:138.9px" width="8" height="8" viewBox="0 0 8 8"><rect x="0.4" y="0.4" width="7.2" height="7.2" rx="1" stroke="#666668" stroke-width="0.6" fill="none"/><rect x="1.4" y="2.9" width="5.2" height="2.2" fill="#c4c4c4"/><rect x="6.5" y="0.8" width="0.6" height="6.4" fill="#9a9a9a"/></svg>
<svg class="a" style="left:829px;top:138.9px" width="8" height="8" viewBox="0 0 8 8"><rect x="0.4" y="0.4" width="7.2" height="7.2" rx="1" stroke="#666668" stroke-width="0.6" fill="none"/><rect x="2.9" y="1.4" width="2.2" height="5.2" fill="#c4c4c4"/><rect x="0.8" y="0.8999999999999999" width="6.4" height="0.6" fill="#9a9a9a"/></svg>
<svg class="a" style="left:842.9px;top:138.9px" width="8" height="8" viewBox="0 0 8 8"><rect x="0.4" y="0.4" width="7.2" height="7.2" rx="1" stroke="#666668" stroke-width="0.6" fill="none"/><rect x="2.9" y="1.4" width="2.2" height="5.2" fill="#c4c4c4"/><rect x="0.8" y="3.7" width="6.4" height="0.6" fill="#9a9a9a"/></svg>
<svg class="a" style="left:857px;top:138.9px" width="8" height="8" viewBox="0 0 8 8"><rect x="0.4" y="0.4" width="7.2" height="7.2" rx="1" stroke="#666668" stroke-width="0.6" fill="none"/><rect x="2.9" y="1.4" width="2.2" height="5.2" fill="#c4c4c4"/><rect x="0.8" y="6.5" width="6.4" height="0.6" fill="#9a9a9a"/></svg>
<div class="a" style="left:753.1px;top:154.9px;width:32.0px;height:10.5px;background:#3b3b3d;border-radius:1.5px;box-shadow:inset 0 0 0 0.6px #474749"></div>
<div class="t" style="left:755.8000000000001px;top:160.35px;font-size:6px;color:#e6e6e6">110</div>
<div class="t c" style="left:780.7px;top:160.15px;font-size:5px;color:#929292">X</div>
<div class="a" style="left:793.1px;top:154.9px;width:31.899999999999977px;height:10.5px;background:#3b3b3d;border-radius:1.5px;box-shadow:inset 0 0 0 0.6px #474749"></div>
<div class="t" style="left:795.8000000000001px;top:160.35px;font-size:6px;color:#e6e6e6">208</div>
<div class="t c" style="left:820.6px;top:160.15px;font-size:5px;color:#929292">Y</div>
<div class="a" style="left:833.1px;top:154.9px;width:31.899999999999977px;height:10.5px;background:#3b3b3d;border-radius:1.5px;box-shadow:inset 0 0 0 0.6px #474749"></div>
<div class="t" style="left:835.8000000000001px;top:160.35px;font-size:6px;color:#e6e6e6">0</div>
<div class="t c" style="left:860.6px;top:160.15px;font-size:5px;color:#929292">°</div>
<div class="a" style="left:753.1px;top:170.5px;width:32.0px;height:10.599999999999994px;background:#3b3b3d;border-radius:1.5px;box-shadow:inset 0 0 0 0.6px #474749"></div>
<div class="t" style="left:755.8000000000001px;top:176.0px;font-size:6px;color:#e6e6e6">580</div>
<div class="t c" style="left:780.7px;top:175.80px;font-size:5px;color:#929292">W</div>
<div class="a" style="left:793.1px;top:170.5px;width:31.899999999999977px;height:10.599999999999994px;background:#3b3b3d;border-radius:1.5px;box-shadow:inset 0 0 0 0.6px #474749"></div>
<div class="t" style="left:795.8000000000001px;top:176.0px;font-size:6px;color:#e6e6e6">264</div>
<div class="t c" style="left:820.6px;top:175.80px;font-size:5px;color:#929292">H</div>
<div class="a" style="left:833.1px;top:170.5px;width:14.5px;height:10.6px;background:#2f2f31;border:0.6px solid #3c3c3e;border-radius:1.5px"></div>
<div class="a" style="left:850.6px;top:170.5px;width:14.4px;height:10.6px;background:#2f2f31;border:0.6px solid #3c3c3e;border-radius:1.5px"></div>
<svg class="a" style="left:836.5px;top:172.3px" width="8" height="7" viewBox="0 0 8 7"><path d="M3.6 0.5 L1 6.5 H3.6Z M4.4 0.5 L7 6.5 H4.4Z" fill="#bdbdbd"/></svg>
<svg class="a" style="left:853.8px;top:172.3px" width="8" height="7" viewBox="0 0 8 7"><path d="M0.5 0.8 L7.5 3.5 L0.5 3.5Z M0.5 4.2 L7.5 4.2 L0.5 6.5Z" fill="#bdbdbd"/></svg>
<div class="a" style="left:748.4px;top:186.1px;width:121.6px;height:0.6px;background:#3a3a3c"></div>
<div class="t" style="left:753px;top:194.8px;font-size:5px;font-weight:bold;color:#9c9c9c;letter-spacing:0.22px">RESIZING</div>
<svg class="a" style="left:857.6px;top:192.3px" width="6" height="5" viewBox="0 0 6 5"><path d="M0.8 1.3 L3 3.5 L5.2 1.3" stroke="#9c9c9c" stroke-width="0.8" fill="none"/></svg>
<div class="a" style="left:753px;top:203px;width:32.4px;height:23.4px;background:#3c3c3e;border-radius:2px"></div>
<div class="a" style="left:793.1px;top:203px;width:31.9px;height:23.4px;background:#3c3c3e;border-radius:2px"></div>
<div class="a" style="left:833.3px;top:203px;width:32.2px;height:23.4px;background:#2b2b2c;border:0.6px solid #38383a;border-radius:2px;background-image:radial-gradient(#4a4a4a 0.5px,transparent 0.6px);background-size:2.2px 2.2px"></div>
<svg class="a" style="left:753px;top:203px" width="33" height="24" viewBox="0 0 33 24"><path d="M13.5 2.3 H19.5 M16.5 2.3 V5.5" stroke="#1d7fe6" stroke-width="0.9"/><path d="M2.2 8.8 V14.2 M2.2 11.5 H6" stroke="#1d7fe6" stroke-width="0.9"/><rect x="14.2" y="9.2" width="4.5" height="4.5" stroke="#6e6e70" stroke-width="0.6" fill="none"/><path d="M30.2 8.8 V14.2 M30.2 11.5 H27" stroke="#6e6e70" stroke-width="0.6"/><path d="M13.5 20.5 H19.5 M16.5 20.5 V17.5" stroke="#6e6e70" stroke-width="0.6"/></svg>
<svg class="a" style="left:793.1px;top:203px" width="32" height="24" viewBox="0 0 32 24"><path d="M2.5 11.5 H29.5 M2.5 9.8 V13.2 M29.5 9.8 V13.2" stroke="#707072" stroke-width="0.6"/><path d="M16 2 V21.5 M14.6 2 H17.4 M14.6 21.5 H17.4" stroke="#1d7fe6" stroke-width="0.9"/></svg>
<svg class="a" style="left:836.5px;top:205.5px" width="8" height="8" viewBox="0 0 8 8"><rect x="0.5" y="0.5" width="7" height="7" stroke="#8a8a8a" stroke-width="0.6" stroke-dasharray="0.8 0.9" fill="none"/><rect x="2" y="2" width="4" height="4" fill="#3ec23a"/></svg>
<div class="t c" style="left:769.2px;top:232.2px;font-size:5.2px;color:#e0e0e0">Pin to Edge</div>
<div class="t c" style="left:809px;top:232.2px;font-size:5.2px;color:#e0e0e0">Fix Size</div>
<div class="t c" style="left:848.8px;top:232.2px;font-size:5.2px;color:#e0e0e0">Preview</div>
<div class="a" style="left:748.4px;top:238.2px;width:121.6px;height:0.6px;background:#3a3a3c"></div>
<div class="t" style="left:753px;top:246.6px;font-size:5px;font-weight:bold;color:#9c9c9c;letter-spacing:0.22px">PROTOTYPING</div>
<div class="a" style="left:858px;top:246.2px;width:5.4px;height:0.8px;background:#9c9c9c"></div>
<div class="a" style="left:860.3px;top:243.9px;width:0.8px;height:5.4px;background:#9c9c9c"></div>
<div class="a" style="left:753px;top:253.8px;width:112px;height:0.6px;background:#3a3a3c"></div>
<div class="a" style="left:753px;top:262px;width:6.2px;height:6.2px;background:#3a3a3c;border:0.6px solid #48484a;border-radius:1px"></div>
<div class="t" style="left:761.8px;top:265.4px;font-size:6px;color:#e0e0e0">Fix position when scrolling</div>
<div class="a" style="left:748.4px;top:275.2px;width:121.6px;height:0.6px;background:#3a3a3c"></div>
<div class="t" style="left:753px;top:283.9px;font-size:5px;font-weight:bold;color:#9c9c9c;letter-spacing:0.22px">APPEARANCE</div>
<svg class="a" style="left:857.6px;top:281.4px" width="6" height="5" viewBox="0 0 6 5"><path d="M0.8 1.3 L3 3.5 L5.2 1.3" stroke="#9c9c9c" stroke-width="0.8" fill="none"/></svg>
<div class="a" style="left:753px;top:292.2px;width:112.2px;height:18.9px;background:#404042;border-radius:2px"></div>
<div class="t" style="left:756.5px;top:301.8px;font-size:10.5px;font-weight:bold;font-family:'Liberation Serif',serif;color:#0e0e0e;letter-spacing:-0.5px">H1</div>
<div class="t" style="left:773.8px;top:298px;font-size:5.5px;color:#f0f0f0">H1</div>
<div class="t" style="left:773.8px;top:305.5px;font-size:4.8px;color:#a8a8a8">Styles/</div>
<svg class="a" style="left:856.5px;top:299.3px" width="6" height="5" viewBox="0 0 6 5"><path d="M0.8 1.3 L3 3.5 L5.2 1.3" stroke="#b0b0b0" stroke-width="0.8" fill="none"/></svg>
<div class="t" style="left:753px;top:321.8px;font-size:6px;color:#e4e4e4">Opacity (Normal)</div>
<svg class="a" style="left:802.6px;top:318.5px" width="5" height="7" viewBox="0 0 5 7"><path d="M1 2.6 L2.5 1 L4 2.6 M1 4.4 L2.5 6 L4 4.4" stroke="#9a9a9a" stroke-width="0.6" fill="none"/></svg>
<div class="a" style="left:753px;top:328px;width:87px;height:1.6px;background:#1a7ef2;border-radius:1px"></div>
<div class="a" style="left:837.1px;top:326.1px;width:5.3px;height:5.3px;background:#a9a9a9;border-radius:50%"></div>
<div class="a" style="left:845.8px;top:323.8px;width:19.4px;height:10.5px;background:#3b3b3d;border-radius:1.5px;box-shadow:inset 0 0 0 0.6px #474749"></div>
<div class="t" style="left:848.2px;top:329.2px;font-size:6px;color:#e6e6e6">100<span style="font-size:4.8px;color:#a0a0a0">%</span></div>
<div class="a" style="left:748.4px;top:338.9px;width:121.6px;height:0.6px;background:#3a3a3c"></div>
<div class="t" style="left:753px;top:348px;font-size:5px;font-weight:bold;color:#9c9c9c;letter-spacing:0.22px">TEXT</div>
<svg class="a" style="left:857.6px;top:345.5px" width="6" height="5" viewBox="0 0 6 5"><path d="M0.8 1.3 L3 3.5 L5.2 1.3" stroke="#9c9c9c" stroke-width="0.8" fill="none"/></svg>
<svg class="a" style="left:845px;top:344.5px" width="7" height="7" viewBox="0 0 7 7"><rect x="3.0" y="0" width="1" height="7" fill="#1a84f5" transform="rotate(0 3.5 3.5)"/><rect x="3.0" y="0" width="1" height="7" fill="#1a84f5" transform="rotate(45 3.5 3.5)"/><rect x="3.0" y="0" width="1" height="7" fill="#1a84f5" transform="rotate(90 3.5 3.5)"/><rect x="3.0" y="0" width="1" height="7" fill="#1a84f5" transform="rotate(135 3.5 3.5)"/><circle cx="3.5" cy="3.5" r="2.5" fill="#1a84f5"/><circle cx="3.5" cy="3.5" r="1" fill="#2d2d2f"/></svg>
<div class="a" style="left:753px;top:356px;width:89.7px;height:10.6px;background:#444446;border-radius:2px;box-shadow:inset 0 0.5px 0 #525254"></div>
<div class="t" style="left:755.7px;top:361.5px;font-size:6px;color:#eeeeee">Playfair Display</div>
<svg class="a" style="left:835.8px;top:359px" width="5" height="4" viewBox="0 0 5 4"><path d="M0.8 1 L2.5 2.8 L4.2 1" stroke="#b0b0b0" stroke-width="0.7" fill="none"/></svg>
<div class="a" style="left:845.8px;top:356px;width:19.40000000000009px;height:10.600000000000023px;background:#3b3b3d;border-radius:1.5px;box-shadow:inset 0 0 0 0.6px #474749"></div>
<div class="t" style="left:848.5px;top:361.5px;font-size:6px;color:#e6e6e6">102</div>
<div class="a" style="left:753px;top:371.8px;width:89.7px;height:10.9px;background:#444446;border-radius:2px;box-shadow:inset 0 0.5px 0 #525254"></div>
<div class="t" style="left:755.7px;top:377.6px;font-size:6px;font-weight:bold;font-family:'Liberation Serif',serif;color:#eeeeee">Bold</div>
<svg class="a" style="left:835.8px;top:373.8px" width="5" height="7" viewBox="0 0 5 7"><path d="M1 2.6 L2.5 1 L4 2.6 M1 4.4 L2.5 6 L4 4.4" stroke="#b0b0b0" stroke-width="0.6" fill="none"/></svg>
<div class="a" style="left:846.2px;top:372px;width:18.6px;height:10.4px;background:#0b0b0b;border-radius:1.5px;border:0.5px solid #444"></div>
<div class="a" style="left:753px;top:387.6px;width:22px;height:10.899999999999977px;background:#353537;border:0.6px solid #434345;border-radius:1.5px"></div>
<div class="t" style="left:755.7px;top:393.25px;font-size:6px;color:#6c6c6c">auto</div>
<div class="a" style="left:778.2px;top:387.6px;width:21.799999999999955px;height:10.899999999999977px;background:#353537;border:0.6px solid #434345;border-radius:1.5px"></div>
<div class="t" style="left:780.9000000000001px;top:393.25px;font-size:6px;color:#e6e6e6">88</div>
<div class="a" style="left:803.1px;top:387.6px;width:21.899999999999977px;height:10.899999999999977px;background:#353537;border:0.6px solid #434345;border-radius:1.5px"></div>
<div class="t" style="left:805.8000000000001px;top:393.25px;font-size:6px;color:#e6e6e6">0</div>
<div class="a" style="left:833.3px;top:387.6px;width:15.8px;height:10.9px;background:#2f2f31;border:0.6px solid #3e3e40;border-radius:1.5px 0 0 1.5px"></div>
<div class="a" style="left:848.8px;top:387.6px;width:16.4px;height:10.9px;background:#1a84f5;border-radius:0 1.5px 1.5px 0"></div>
<svg class="a" style="left:836.8px;top:389.2px" width="9" height="8" viewBox="0 0 9 8"><path d="M1 6 H8 M1 5 V7 M8 5 V7" stroke="#a0a0a0" stroke-width="0.6"/><path d="M4.5 1 V3.5 M3.5 2 L4.5 1 L5.5 2" stroke="#a0a0a0" stroke-width="0.6" fill="none"/></svg>
<svg class="a" style="left:852.5px;top:389.2px" width="9" height="8" viewBox="0 0 9 8"><rect x="1.5" y="1.2" width="6" height="5.6" stroke="#ffffff" stroke-width="0.8" fill="none"/><rect x="0.8" y="0.5" width="1.4" height="1.4" fill="#fff"/><rect x="6.8" y="0.5" width="1.4" height="1.4" fill="#fff"/><rect x="0.8" y="6.1" width="1.4" height="1.4" fill="#fff"/><rect x="6.8" y="6.1" width="1.4" height="1.4" fill="#fff"/></svg>
<div class="t c" style="left:764px;top:403.4px;font-size:5.2px;color:#dcdcdc">Character</div>
<div class="t c" style="left:789px;top:403.4px;font-size:5.2px;color:#dcdcdc">Line</div>
<div class="t c" style="left:814px;top:403.4px;font-size:5.2px;color:#dcdcdc">Paragraph</div>
<div class="t c" style="left:848.5px;top:403.4px;font-size:5.2px;color:#dcdcdc">Fixed</div>
<div class="a" style="left:753px;top:410.8px;width:117px;height:0.6px;background:#3a3a3c"></div>
<div class="t" style="left:753px;top:418.3px;font-size:6px;font-weight:bold;color:#e8e8e8">Alignment</div>
<div class="a" style="left:753px;top:426.3px;width:112.2px;height:10.9px;background:#2f2f31;border:0.6px solid #3c3c3e;border-radius:2px"></div>
<div class="a" style="left:753px;top:426.3px;width:29px;height:10.9px;background:#1a84f5;border-radius:2px 0 0 2px"></div>
<div class="a" style="left:809.3px;top:426.3px;width:0.6px;height:10.9px;background:#3c3c3e"></div>
<div class="a" style="left:836.5px;top:426.3px;width:0.6px;height:10.9px;background:#3c3c3e"></div>
<svg class="a" style="left:764.5px;top:429.6px" width="6" height="5" viewBox="0 0 6 5"><rect x="0" y="0.0" width="6" height="0.8" fill="#ffffff"/><rect x="0" y="1.8" width="4" height="0.8" fill="#ffffff"/><rect x="0" y="3.6" width="6" height="0.8" fill="#ffffff"/></svg>
<svg class="a" style="left:792.7px;top:429.6px" width="6" height="5" viewBox="0 0 6 5"><rect x="0.0" y="0.0" width="6" height="0.8" fill="#8e8e8e"/><rect x="1.0" y="1.8" width="4" height="0.8" fill="#8e8e8e"/><rect x="0.0" y="3.6" width="6" height="0.8" fill="#8e8e8e"/></svg>
<svg class="a" style="left:820px;top:429.6px" width="6" height="5" viewBox="0 0 6 5"><rect x="0" y="0.0" width="6" height="0.8" fill="#8e8e8e"/><rect x="2" y="1.8" width="4" height="0.8" fill="#8e8e8e"/><rect x="0" y="3.6" width="6" height="0.8" fill="#8e8e8e"/></svg>
<svg class="a" style="left:847.9px;top:429.6px" width="6" height="5" viewBox="0 0 6 5"><rect x="0" y="0.0" width="6" height="0.8" fill="#8e8e8e"/><rect x="0" y="1.8" width="6" height="0.8" fill="#8e8e8e"/><rect x="0" y="3.6" width="6" height="0.8" fill="#8e8e8e"/></svg>
<div class="a" style="left:753px;top:442.5px;width:112.2px;height:10.5px;background:#2f2f31;border:0.6px solid #3c3c3e;border-radius:2px"></div>
<div class="a" style="left:753px;top:442.5px;width:37.8px;height:10.5px;background:#1a84f5;border-radius:2px 0 0 2px"></div>
<div class="a" style="left:827.7px;top:442.5px;width:0.6px;height:10.5px;background:#3c3c3e"></div>
<svg class="a" style="left:768.5px;top:444.3px" width="7" height="7" viewBox="0 0 7 7"><path d="M0.8 1 H6.2 M3.5 2 V6.5 M2 3.5 L3.5 2 L5 3.5" stroke="#fff" stroke-width="0.8" fill="none"/></svg>
<svg class="a" style="left:805.7px;top:444.3px" width="7" height="7" viewBox="0 0 7 7"><path d="M0.8 3.5 H6.2 M3.5 0.5 V6.5" stroke="#8e8e8e" stroke-width="0.6" fill="none"/></svg>
<svg class="a" style="left:843px;top:444.3px" width="7" height="7" viewBox="0 0 7 7"><path d="M0.8 6 H6.2 M3.5 1 V5" stroke="#8e8e8e" stroke-width="0.6" fill="none"/></svg>
<div class="a" style="left:753px;top:458.2px;width:117px;height:0.6px;background:#3a3a3c"></div>
<div class="t" style="left:753px;top:466.4px;font-size:6px;font-weight:bold;color:#e8e8e8">Text Options</div>
<div class="a" style="left:753px;top:474.5px;width:53.8px;height:10.8px;background:#444446;border-radius:2px;box-shadow:inset 0 0.5px 0 #525254"></div>
<div class="t" style="left:756px;top:480px;font-size:6px;color:#eeeeee"><span style="color:#9a9a9a">Aa</span> <b>None</b></div>
<svg class="a" style="left:799.8px;top:476.5px" width="5" height="7" viewBox="0 0 5 7"><path d="M1 2.6 L2.5 1 L4 2.6 M1 4.4 L2.5 6 L4 4.4" stroke="#b0b0b0" stroke-width="0.6" fill="none"/></svg>
<div class="a" style="left:811.4px;top:474.5px;width:53.9px;height:10.8px;background:#2f2f31;border:0.6px solid #3c3c3e;border-radius:2px"></div>
<div class="a" style="left:811.4px;top:474.5px;width:18px;height:10.8px;background:#1a84f5;border-radius:2px 0 0 2px"></div>
<div class="a" style="left:847px;top:474.5px;width:0.6px;height:10.8px;background:#3c3c3e"></div>
<div class="t c" style="left:820.4px;top:480.2px;font-size:6px;color:#ffffff">Aa</div>
<div class="t c" style="left:838.1px;top:480.2px;font-size:6px;color:#a0a0a0">AA</div>
<div class="t c" style="left:855.9px;top:480.2px;font-size:6px;color:#a0a0a0">aa</div>
<div class="t c" style="left:779.8px;top:490.3px;font-size:5.2px;color:#dcdcdc">Decoration</div>
<div class="t c" style="left:838.1px;top:490.3px;font-size:5.2px;color:#dcdcdc">Transform</div>
<div class="a" style="left:748.4px;top:497.3px;width:121.6px;height:0.6px;background:#3a3a3c"></div>
<div class="t" style="left:753px;top:505.4px;font-size:5px;font-weight:bold;color:#9c9c9c;letter-spacing:0.22px">STYLE</div>
<svg class="a" style="left:857.6px;top:502.9px" width="6" height="5" viewBox="0 0 6 5"><path d="M0.8 1.3 L3 3.5 L5.2 1.3" stroke="#9c9c9c" stroke-width="0.8" fill="none"/></svg>
</body></html>
